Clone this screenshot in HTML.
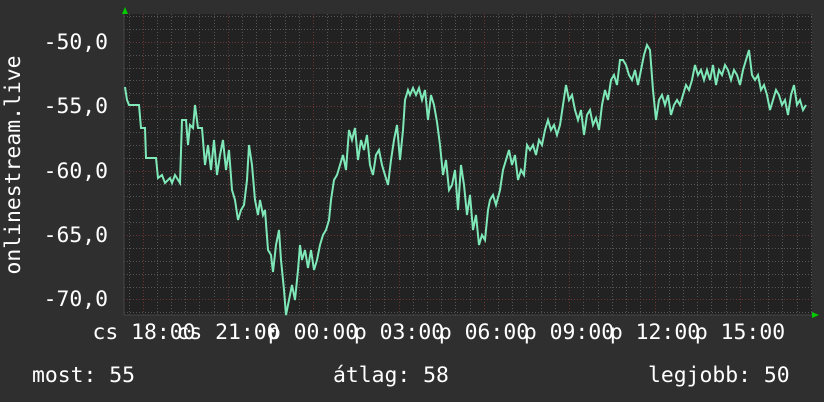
<!DOCTYPE html>
<html><head><meta charset="utf-8"><style>
html,body{margin:0;padding:0;background:#2f2f2f;}
svg{display:block}
text{font-family:"DejaVu Sans Mono","Liberation Mono",monospace;font-size:21.4px;fill:#fff}
</style></head><body>
<svg width="824" height="402" viewBox="0 0 824 402">
<rect width="824" height="402" fill="#2f2f2f"/>
<rect x="124" y="14" width="688" height="301" fill="#222"/>
<g stroke="#555" stroke-width="1" stroke-dasharray="1,2">
<path d="M124,16.5H812M124,29.5H812M124,55.5H812M124,68.5H812M124,80.5H812M124,93.5H812M124,119.5H812M124,132.5H812M124,145.5H812M124,158.5H812M124,184.5H812M124,196.5H812M124,209.5H812M124,222.5H812M124,248.5H812M124,261.5H812M124,274.5H812M124,287.5H812M124,312.5H812"/>
<path d="M129.5,14V315M157.5,14V315M171.5,14V315M185.5,14V315M199.5,14V315M214.5,14V315M242.5,14V315M256.5,14V315M270.5,14V315M285.5,14V315M299.5,14V315M327.5,14V315M341.5,14V315M356.5,14V315M370.5,14V315M384.5,14V315M413.5,14V315M427.5,14V315M441.5,14V315M455.5,14V315M470.5,14V315M498.5,14V315M512.5,14V315M526.5,14V315M541.5,14V315M555.5,14V315M583.5,14V315M598.5,14V315M612.5,14V315M626.5,14V315M640.5,14V315M669.5,14V315M683.5,14V315M697.5,14V315M711.5,14V315M726.5,14V315M754.5,14V315M768.5,14V315M782.5,14V315M797.5,14V315M811.5,14V315"/>
</g>
<g stroke="#6a3535" stroke-width="1" stroke-dasharray="1,2">
<path d="M124,42.5H812M124,106.5H812M124,171.5H812M124,235.5H812M124,299.5H812"/>
<path d="M143.5,14V315M228.5,14V315M313.5,14V315M399.5,14V315M484.5,14V315M569.5,14V315M655.5,14V315M740.5,14V315"/>
</g>
<path d="M124,315H814M124,315V12" stroke="#444" stroke-width="1"/>
<polygon points="122,14 128,14 125,7" fill="#0c0"/>
<polygon points="812,312 812,318 819,315" fill="#0c0"/>
<polyline fill="none" stroke="#7fe8b8" stroke-width="2" points="125,87 127,100 129,105 139,105 141,128 145,128 146,158 156,158 158,178 162,175 165,183 170,178 172,183 175,175 180,183 182,120 186,120 188,145 190,125 193,128 195,105 198,128 202,128 205,165 208,145 211,170 214,140 217,175 220,155 223,140 226,170 229,150 232,190 235,200 238,220 241,210 244,205 247,180 249,145 252,165 255,200 258,215 260,200 263,215 265,210 268,250 271,255 273,272 276,245 279,230 281,260 284,290 286,315 289,300 292,285 295,300 298,270 300,245 302,260 305,250 308,268 311,250 314,270 317,260 320,245 323,235 326,230 329,220 331,200 334,180 337,175 340,165 343,155 346,170 349,130 352,140 355,128 358,160 361,140 364,150 367,135 370,165 373,175 376,155 379,150 382,165 385,175 388,185 391,160 394,140 397,125 400,160 403,130 405,100 408,90 410,95 413,88 416,95 419,88 422,100 425,90 428,120 431,95 434,105 437,122 440,145 443,175 446,160 449,190 452,185 455,170 458,210 461,165 464,185 467,215 470,195 473,230 476,215 479,245 482,235 485,240 488,210 490,200 493,195 496,205 500,190 503,170 506,160 509,150 512,165 515,155 518,180 521,170 524,175 527,145 530,150 533,145 536,155 539,140 542,145 545,130 548,120 551,130 554,125 557,135 560,125 563,105 566,85 569,100 572,95 575,110 578,120 581,110 584,135 587,115 590,110 593,125 596,118 599,130 602,105 605,90 608,100 611,80 614,75 617,85 620,60 623,60 626,65 629,75 632,80 635,70 638,85 641,70 644,55 647,45 650,50 653,90 656,120 659,100 662,95 665,105 668,95 671,115 674,105 677,100 680,105 683,95 686,85 689,90 692,80 695,65 698,75 701,70 704,80 707,70 710,80 713,65 716,85 719,70 722,75 725,65 728,70 731,80 734,70 737,75 740,85 743,70 746,60 749,50 752,75 755,80 758,75 761,90 764,85 767,95 770,110 773,100 776,90 779,95 782,105 785,100 788,115 791,95 794,85 797,105 800,100 803,110 806,105"/>
<g text-anchor="end">
<text x="108" y="49">-50,0</text>
<text x="108" y="113">-55,0</text>
<text x="108" y="178">-60,0</text>
<text x="108" y="242">-65,0</text>
<text x="108" y="306">-70,0</text>
</g>
<text transform="translate(20,165) rotate(-90)" text-anchor="middle">onlinestream.live</text>
<g text-anchor="middle">
<text x="144" y="339">cs 18:00</text>
<text x="228" y="339">cs 21:00</text>
<text x="313" y="339">p 00:00</text>
<text x="399" y="339">p 03:00</text>
<text x="484" y="339">p 06:00</text>
<text x="569" y="339">p 09:00</text>
<text x="655" y="339">p 12:00</text>
<text x="740" y="339">p 15:00</text>
</g>
<text x="32" y="382">most: 55</text>
<text x="333" y="382">átlag: 58</text>
<text x="648" y="382">legjobb: 50</text>
</svg>
</body></html>
